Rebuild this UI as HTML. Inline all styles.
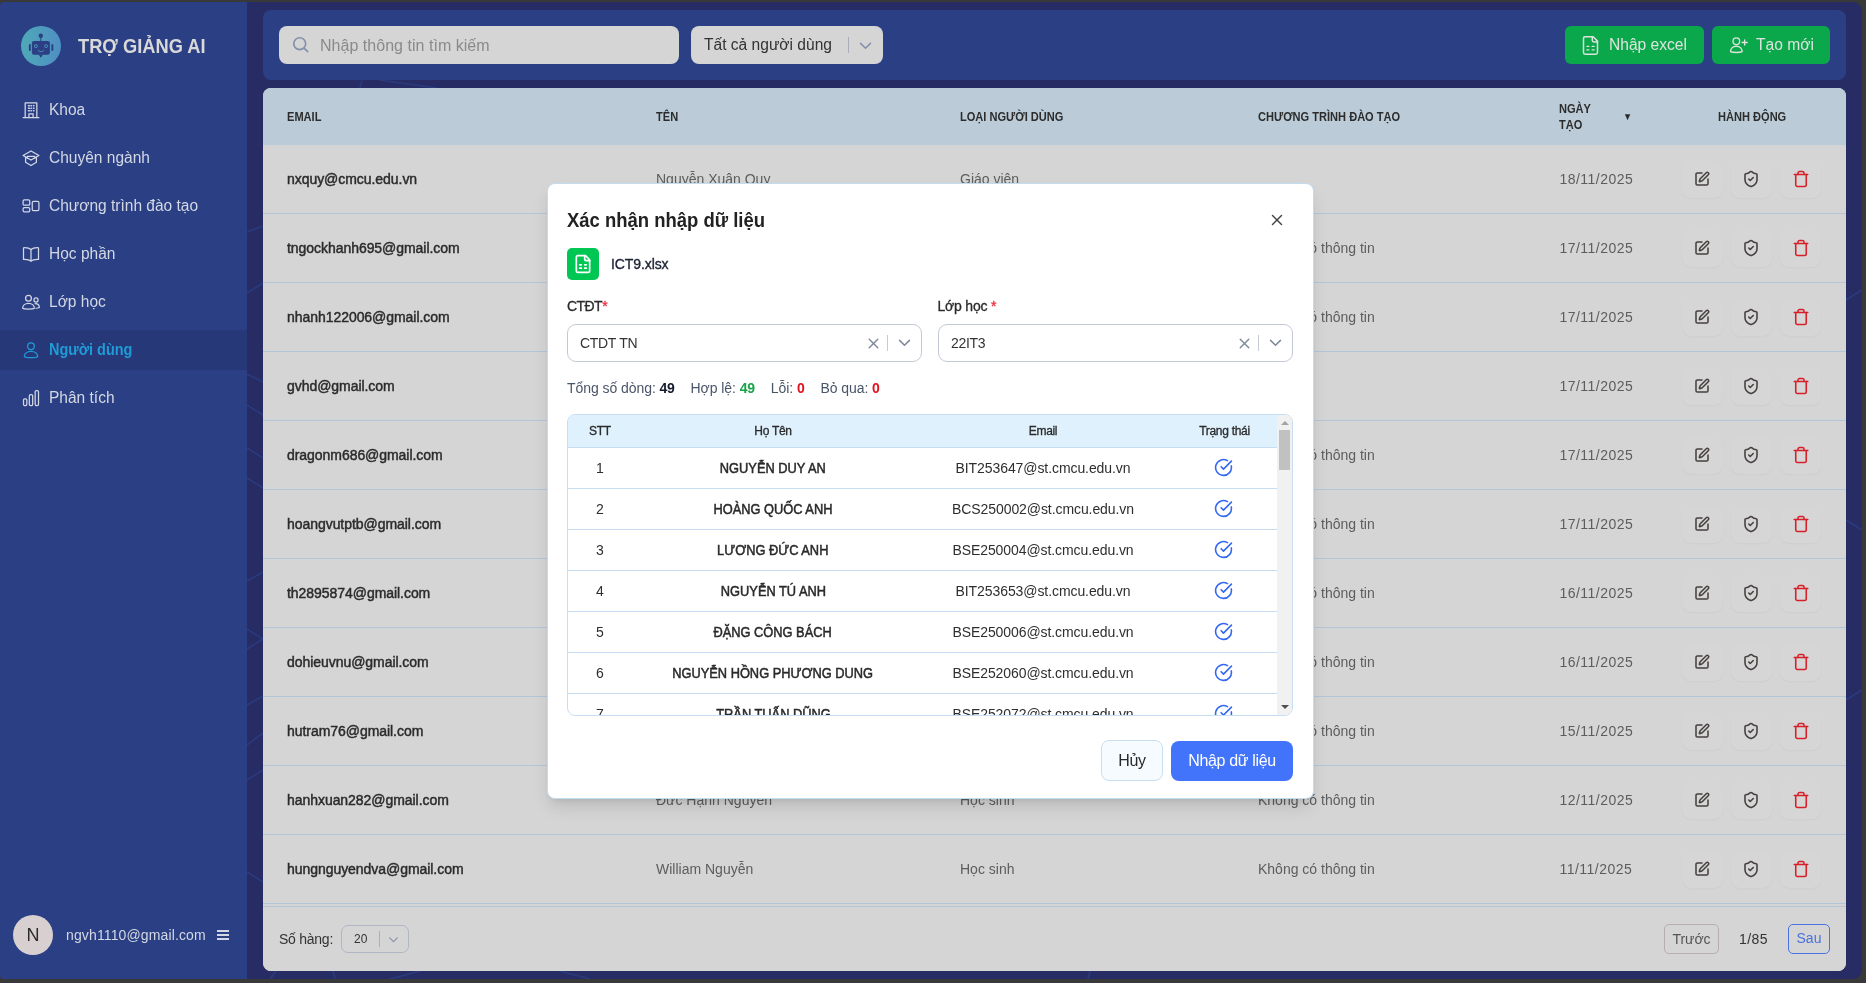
<!DOCTYPE html><html lang="vi"><head><meta charset="utf-8"><title>Trợ giảng AI</title><style>
*{box-sizing:border-box;margin:0;padding:0}
html,body{width:1866px;height:983px;overflow:hidden;background:#393939}
body{font-family:"Liberation Sans","DejaVu Sans",sans-serif;position:relative;color:#2a2a2a;-webkit-font-smoothing:antialiased}
.abs{position:absolute}
#app{position:absolute;left:0;top:2px;width:1862px;height:977px;border-radius:4px 9px 9px 4px;overflow:hidden;background:#272c65}
#pg{position:absolute;left:0;top:-2px;width:1866px;height:983px;will-change:transform}
#side{position:absolute;left:0;top:0;width:247px;height:983px;background:#2b3f84}
.logo{position:absolute;left:21px;top:26px;width:40px;height:40px;border-radius:50%;background:linear-gradient(90deg,#4fa9b7,#4f8fc3)}
.brand{position:absolute;left:78px;top:32.800px;font-size:20.600px;line-height:26px;font-weight:700;color:#d9d9d9;white-space:nowrap;transform:scaleX(.887);transform-origin:0 50%}
.nav{position:absolute;left:0;width:247px;height:40px;color:#d3d8e4;font-size:16px;line-height:40px;white-space:nowrap}
.nav svg{position:absolute;left:21px;top:10px;width:20px;height:20px}
.nav span{position:absolute;left:49px;top:0;transform:scaleX(.97);transform-origin:0 50%}
.nav.on{background:#263877;color:#1f9bd7;font-weight:700}
.nav.on span{transform:scaleX(.904)}
.avatar{position:absolute;left:13px;top:915px;width:40px;height:40px;border-radius:50%;background:#d8cfd1;color:#2b2b2b;font-size:18px;line-height:40px;text-align:center}
.uemail{position:absolute;left:66px;top:925px;font-size:14px;line-height:20px;color:#d3d8e4;letter-spacing:.13px;white-space:nowrap}
.burger{position:absolute;left:217px;top:930px;width:12px;height:10px;border-top:2px solid #d3d8e4;border-bottom:2px solid #d3d8e4}
.burger:after{content:"";position:absolute;left:0;top:2px;width:12px;height:2px;background:#d3d8e4}
#bar{position:absolute;left:263px;top:10px;width:1583px;height:70px;border-radius:8px;background:#2b3f84}
.search{position:absolute;left:279px;top:26px;width:400px;height:38px;border-radius:8px;background:#d5d5d5}
.search span{position:absolute;left:41px;top:0;line-height:39px;font-size:16px;color:#8c8989;letter-spacing:.03px;white-space:nowrap}
.search svg{position:absolute;left:11.500px;top:9px;width:19px;height:19px}
.fsel{position:absolute;left:691px;top:26px;width:192px;height:38px;border-radius:8px;background:#d5d5d5}
.fsel span{position:absolute;left:13px;top:0;line-height:37px;font-size:16px;color:#333;white-space:nowrap;transform:scaleX(.973);transform-origin:0 50%}
.fsel i{position:absolute;left:157px;top:11px;width:1px;height:16px;background:#a9aebb}
.fsel svg{position:absolute;left:165.500px;top:10.500px;width:17px;height:17px}
.gbtn{position:absolute;top:26px;height:38px;border-radius:6px;background:#0ba84b;color:#dde4de;font-size:16px;line-height:37px;white-space:nowrap}
.gbtn svg{position:absolute;left:16px;top:10px;width:18px;height:18px}
.gbtn span{position:absolute;left:44px;top:0;transform:scaleX(.974);transform-origin:0 50%}
#card{position:absolute;left:263px;top:88px;width:1583px;height:883px;border-radius:8px;background:#d5d5d5;overflow:hidden}
.thead{position:absolute;left:0;top:0;width:1583px;height:57px;background:#bbccd8}
.th{position:absolute;font-size:12px;line-height:16px;font-weight:700;color:#2c2c2c;white-space:nowrap;transform:scaleX(.922);transform-origin:0 50%}
.tr{position:absolute;left:0;width:1583px;height:69px;border-bottom:1px solid #b3c7d9}
.tr div{position:absolute;top:0;line-height:68px;font-size:14px;white-space:nowrap;color:#5d5d5d}
.tr .em{left:24px;color:#2b2b2b;letter-spacing:-.05px;-webkit-text-stroke:.45px #2b2b2b}
.tr .nm{left:393px}.tr .ty{left:697px}.tr .pr{left:995px}.tr .dt{left:1296.500px;letter-spacing:.47px}
.act{position:absolute;top:15.500px;width:41px;height:37px;border-radius:9px;background:#d6d6d6;box-shadow:0 1px 2px rgba(0,0,0,.035)}
.act svg{position:absolute}
.tfoot{position:absolute;left:0;top:818px;width:1583px;height:65px;border-top:1px solid #b3c7d9;background:#d5d5d5}
.tfoot .lbl{position:absolute;left:16px;top:21.500px;font-size:14px;line-height:20px;color:#333;letter-spacing:-.25px}
.psel{position:absolute;left:78px;top:18px;width:68px;height:28px;border:1px solid #b0b6c4;border-radius:7px}
.psel span{position:absolute;left:12px;top:0;line-height:26px;font-size:12px;color:#333}
.psel i{position:absolute;left:37px;top:5px;width:1px;height:16px;background:#a9aec0}
.psel svg{position:absolute;left:45px;top:7px;width:13px;height:13px}
.pbtn{position:absolute;top:17px;height:30px;border:1px solid #b8adb2;border-radius:5px;font-size:14px;line-height:28px;text-align:center;color:#555}
.pbtn.nx{border:1.500px solid #4a74e4;color:#4a70dc;line-height:27px}
.pnum{position:absolute;left:1476px;top:22px;font-size:14px;line-height:20px;color:#333;letter-spacing:.45px}

#modal{position:absolute;left:547px;top:183px;width:767px;height:616px;border-radius:8px;background:#fff;border:1px solid #c3ddf0;box-shadow:0 10px 18px -3px rgba(0,0,0,.13),0 4px 6px -2px rgba(0,0,0,.07)}
.m{position:absolute;left:-548px;top:-184px;width:1866px;height:983px;will-change:transform}
.mtitle{position:absolute;left:567px;top:207px;font-size:20px;line-height:26px;font-weight:700;color:#222;white-space:nowrap;transform:scaleX(.923);transform-origin:0 50%}
.mx{position:absolute;left:1268px;top:211px;width:18px;height:18px}
.ficon{position:absolute;left:567px;top:248px;width:32px;height:32px;border-radius:5px;background:#00c753}
.ficon svg{position:absolute;left:6px;top:6px;width:20px;height:20px}
.fname{position:absolute;left:611px;top:254px;font-size:14px;line-height:20px;color:#1c2233;letter-spacing:-.1px;-webkit-text-stroke:.35px #1c2233;white-space:nowrap}
.mlbl{position:absolute;top:296px;font-size:14px;line-height:20px;color:#2a2a2a;letter-spacing:-.2px;-webkit-text-stroke:.3px #2a2a2a;white-space:nowrap}
.mlbl b{color:#f0283c;font-weight:400;-webkit-text-stroke:.3px #f0283c}
.msel{position:absolute;top:324px;width:355px;height:38px;border:1px solid #c3c9d6;border-radius:9px;background:#fff}
.msel span{position:absolute;left:12px;top:0;line-height:36px;font-size:14px;color:#333;letter-spacing:-.3px;white-space:nowrap}
.msel i{position:absolute;left:319px;top:10px;width:1px;height:16px;background:#c5cad3}
.msel svg.x{position:absolute;left:296.500px;top:9.500px;width:17px;height:17px}
.msel svg.c{position:absolute;left:327.500px;top:8.900px;width:17px;height:17px}
.stats{position:absolute;left:567px;top:378px;font-size:14px;line-height:20px;color:#4a5568;letter-spacing:-.06px;white-space:nowrap}
.stats b{font-weight:700;color:#151a2b;letter-spacing:-.3px}
.stats b.g{color:#17a34a}.stats b.r{color:#e0121f}
.stats span{display:inline-block;margin-right:16px}
#mt{will-change:transform;position:absolute;left:567px;top:414px;width:726px;height:302px;border:1px solid #c7ddf1;border-radius:8px;overflow:hidden;background:#fff}
.mth{position:absolute;left:0;top:0;width:709px;height:33px;background:#dff1fd;border-bottom:1px solid #c7ddf1}
.mth div{position:absolute;top:0;line-height:32px;font-size:12px;color:#2a2a2a;text-align:center;letter-spacing:-.3px;-webkit-text-stroke:.3px #2a2a2a}
.mr{position:absolute;left:0;width:709px;height:41px;border-bottom:1px solid #c7ddf1}
.mr div{position:absolute;top:0;line-height:40px;font-size:14px;color:#2e2e2e;text-align:center;white-space:nowrap}
.c1{left:0;width:64px}.c2{left:64px;width:282px}.c3{left:346px;width:258px}.c4{left:604px;width:105px}
.mr .c2{-webkit-text-stroke:.5px #2a2a2a;color:#2a2a2a}.mr .c2 span{display:inline-block;transform:scaleX(.916)}
.mr .c3{letter-spacing:-.08px}
.mr svg{position:absolute;left:646.300px;top:10.400px;width:19px;height:19px}
.sb{position:absolute;left:709px;top:0;width:15px;height:300px;background:#f1f1f1}
.sb .t{position:absolute;left:2px;top:15px;width:11px;height:40px;background:#c1c1c1}
.sb .u{position:absolute;left:3.5px;top:6px;width:0;height:0;border-left:4px solid transparent;border-right:4px solid transparent;border-bottom:4px solid #a3a3a3}
.sb .d{position:absolute;left:3.5px;top:290px;width:0;height:0;border-left:4px solid transparent;border-right:4px solid transparent;border-top:4px solid #505050}
.bcancel{position:absolute;left:1101px;top:740px;width:62px;height:41px;border:1px solid #c9def0;border-radius:8px;background:#f5fbfe;font-size:16px;line-height:39px;text-align:center;color:#2a2a2a;letter-spacing:-.3px}
.bok{position:absolute;left:1171px;top:741px;width:122px;height:40px;border-radius:8px;background:#4274fb;font-size:16px;line-height:39px;text-align:center;color:#fff;letter-spacing:-.35px;white-space:nowrap}
</style></head><body><div id="app"><div id="pg"><svg class="abs" style="left:247px;top:0;width:1619px;height:983px" viewBox="247 0 1619 983" fill="none" stroke="#2f4b96" stroke-width="1.600" opacity=".5">
<path d="M247 232 263 226M247 293 263 283M247 374 263 382M247 405 263 415M247 448 263 458M247 478 263 488M247 581 263 572M247 629 263 639 247 649M247 705 263 696M247 745 263 733M247 780 263 770M247 872 263 882M379 80 437 88M362 80 360 88M276 971 270 979M333 971 335 979M420 971 390 979M560 971 590 979M1090 971 1088 979M1846 300 1862 290M1846 520 1862 530M1846 700 1862 690"/></svg><div id="side"><div class="logo"><svg viewBox="0 0 40 40" style="position:absolute;left:0;top:0;width:40px;height:40px">
<g fill="#2b3f84" stroke="none">
<circle cx="19.800" cy="9.700" r="2.200"/><rect x="19.300" y="11" width="1" height="4.500"/>
<rect x="10.900" y="15" width="18" height="13.700" rx="2"/>
<rect x="7.900" y="18" width="1.900" height="7" rx=".9"/><rect x="30.400" y="18" width="1.900" height="7" rx=".9"/>
<path d="M17.600 28.400h4.400l-2.200 3.300z"/>
</g>
<circle cx="14.900" cy="20.100" r="1.500" fill="none" stroke="#4fa3ba" stroke-width=".8"/>
<circle cx="25" cy="20.100" r="1.500" fill="none" stroke="#4f98c0" stroke-width=".8"/>
<path d="M17.100 24.300c1.700 1.900 4.100 1.900 5.800 0" fill="none" stroke="#4f9dbd" stroke-width=".9" stroke-linecap="round"/>
</svg></div><div class="brand">TRỢ GIẢNG AI</div><div class="nav" style="top:90px"><svg viewBox="0 0 24 24" fill="none" stroke="#d3d8e4" stroke-width="1.5" stroke-linecap="round" stroke-linejoin="round" ><path d="M2.5 21h19"/><path d="M5 21V3.5h14V21"/><path d="M9.5 21v-4.5h5V21"/><path d="M9 7h1M12 7h.5M15 7h.5M9 10h1M12 10h.5M15 10h.5M9 13h1M12 13h.5M15 13h.5" stroke-width="1.8"/></svg><span>Khoa</span></div><div class="nav" style="top:138px"><svg viewBox="0 0 24 24" fill="none" stroke="#d3d8e4" stroke-width="1.5" stroke-linecap="round" stroke-linejoin="round" ><path d="M12 3.5 21.5 9 12 14.500 2.500 9Z"/><path d="M5.500 11v6L12 21l6.500-4v-6"/><path d="M7.500 12.500v-2.500h9v2.500" stroke-width="1.400"/></svg><span>Chuyên ngành</span></div><div class="nav" style="top:186px"><svg viewBox="0 0 24 24" fill="none" stroke="#d3d8e4" stroke-width="1.5" stroke-linecap="round" stroke-linejoin="round" ><rect x="2.500" y="4.500" width="8" height="6.500" rx="1.500"/><rect x="2.500" y="14" width="8" height="5" rx="1.500"/><rect x="13.500" y="6.500" width="8" height="11" rx="1.500"/></svg><span>Chương trình đào tạo</span></div><div class="nav" style="top:234px"><svg viewBox="0 0 24 24" fill="none" stroke="#d3d8e4" stroke-width="1.5" stroke-linecap="round" stroke-linejoin="round" ><path d="M12 6.500c-2-1.700-5-2.200-9-2v14c4-.2 7 .3 9 2 2-1.700 5-2.200 9-2v-14c-4-.2-7 .3-9 2z"/><path d="M12 6.500v14"/></svg><span>Học phần</span></div><div class="nav" style="top:282px"><svg viewBox="0 0 24 24" fill="none" stroke="#d3d8e4" stroke-width="1.5" stroke-linecap="round" stroke-linejoin="round" ><circle cx="9" cy="7.500" r="3.500"/><path d="M2 19.500c0-3.500 3-6 7-6s7 2.500 7 6c-2 1.300-12 1.300-14 0z"/><circle cx="18" cy="9.500" r="2.500"/><path d="M17 14c3 0 5 1.800 5 4.500-1 .6-2.500.9-4 1"/></svg><span>Lớp học</span></div><div class="nav on" style="top:330px"><svg viewBox="0 0 24 24" fill="none" stroke="#1f9bd7" stroke-width="1.5" stroke-linecap="round" stroke-linejoin="round" ><circle cx="12" cy="7.500" r="4"/><path d="M4 20c0-4 3.500-6.500 8-6.500s8 2.500 8 6.500c-2.500 1.500-13.500 1.500-16 0z"/></svg><span>Người dùng</span></div><div class="nav" style="top:378px"><svg viewBox="0 0 24 24" fill="none" stroke="#d3d8e4" stroke-width="1.5" stroke-linecap="round" stroke-linejoin="round" ><rect x="3" y="13" width="4" height="8" rx="1.500"/><rect x="10" y="8" width="4" height="13" rx="1.500"/><rect x="17" y="3" width="4" height="18" rx="1.500"/></svg><span>Phân tích</span></div><div class="avatar">N</div><div class="uemail">ngvh1110@gmail.com</div><div class="burger"></div></div><div id="bar"></div><div class="search"><svg viewBox="0 0 24 24" fill="none" stroke="#8291ab" stroke-width="2.1" stroke-linecap="round" stroke-linejoin="round" ><circle cx="11" cy="11" r="7.500"/><path d="m21 21-4.500-4.500"/></svg><span>Nhập thông tin tìm kiếm</span></div><div class="fsel"><span>Tất cả người dùng</span><i></i><svg viewBox="0 0 24 24" fill="none" stroke="#8290a8" stroke-width="2.1" stroke-linecap="round" stroke-linejoin="round" ><path d="m5 9 7 7 7-7"/></svg></div><div class="gbtn" style="left:1565px;width:139px"><svg viewBox="0 0 24 24" fill="none" stroke="#dde4de" stroke-width="1.7" stroke-linecap="round" stroke-linejoin="round" style="left:14.500px;top:8.500px;width:21px;height:21px"><path d="M15 2H6a2 2 0 0 0-2 2v16a2 2 0 0 0 2 2h12a2 2 0 0 0 2-2V7Z"/><path d="M14 2v4a2 2 0 0 0 2 2h4"/><path d="M8 13h2"/><path d="M14 13h2"/><path d="M8 17h2"/><path d="M14 17h2"/></svg><span>Nhập excel</span></div><div class="gbtn" style="left:1712px;width:118px"><svg viewBox="0 0 24 24" fill="none" stroke="#dde4de" stroke-width="1.6" stroke-linecap="round" stroke-linejoin="round" style="left:15.500px;top:9px;width:20px;height:20px"><circle cx="10" cy="7.500" r="4"/><path d="M3 20c0-4 3-6.500 7-6.500s7 2.500 7 6.500c-2.500 1.300-11.500 1.300-14 0z"/><path d="M20 6v6M17 9h6"/></svg><span>Tạo mới</span></div><div id="card"><div class="thead"><div class="th" style="left:24px;top:21px">EMAIL</div><div class="th" style="left:393px;top:21px">TÊN</div><div class="th" style="left:697px;top:21px">LOẠI NGƯỜI DÙNG</div><div class="th" style="left:995px;top:21px">CHƯƠNG TRÌNH ĐÀO TẠO</div><div class="th" style="left:1296px;top:13px">NGÀY<br>TẠO</div><div class="th" style="left:1360px;top:21px;font-size:10px;letter-spacing:0">▼</div><div class="th" style="left:1454.600px;top:21px">HÀNH ĐỘNG</div></div><div class="tr" style="top:57px"><div class="em">nxquy@cmcu.edu.vn</div><div class="nm">Nguyễn Xuân Quy</div><div class="ty">Giáo viên</div><div class="pr"></div><div class="dt">18/11/2025</div><span class="act" style="left:1419px"><svg viewBox="0 0 24 24" fill="none" stroke="#474040" stroke-width="2.3" stroke-linecap="round" stroke-linejoin="round" style="left:11.700px;top:10.300px;width:16px;height:16px"><path d="M12 3H5a2 2 0 0 0-2 2v14a2 2 0 0 0 2 2h14a2 2 0 0 0 2-2v-7"/><path d="M18.375 2.625a1 1 0 0 1 3 3l-9.013 9.014a2 2 0 0 1-.853.505l-2.873.84a.5.5 0 0 1-.62-.62l.84-2.873a2 2 0 0 1 .506-.852z"/></svg></span><span class="act" style="left:1468px"><svg viewBox="0 0 24 24" fill="none" stroke="#474040" stroke-width="2.1" stroke-linecap="round" stroke-linejoin="round" style="left:10.900px;top:9.400px;width:18px;height:18px"><path d="M20 13c0 5-3.500 7.500-7.660 8.950a1 1 0 0 1-.670-.010C7.500 20.500 4 18 4 13V6a1 1 0 0 1 1-1c2 0 4.500-1.200 6.240-2.720a1.170 1.170 0 0 1 1.520 0C14.510 3.810 17 5 19 5a1 1 0 0 1 1 1z"/><path d="m9 12 2 2 4-4"/></svg></span><span class="act" style="left:1517px"><svg viewBox="0 0 24 24" fill="none" stroke="#d8202a" stroke-width="2.1" stroke-linecap="round" stroke-linejoin="round" style="left:11.900px;top:9.200px;width:18px;height:18px"><path d="M3 6h18"/><path d="M19 6v14c0 1-1 2-2 2H7c-1 0-2-1-2-2V6"/><path d="M8 6V4c0-1 1-2 2-2h4c1 0 2 1 2 2v2"/></svg></span></div><div class="tr" style="top:126px"><div class="em">tngockhanh695@gmail.com</div><div class="nm"></div><div class="ty">Học sinh</div><div class="pr">Không có thông tin</div><div class="dt">17/11/2025</div><span class="act" style="left:1419px"><svg viewBox="0 0 24 24" fill="none" stroke="#474040" stroke-width="2.3" stroke-linecap="round" stroke-linejoin="round" style="left:11.700px;top:10.300px;width:16px;height:16px"><path d="M12 3H5a2 2 0 0 0-2 2v14a2 2 0 0 0 2 2h14a2 2 0 0 0 2-2v-7"/><path d="M18.375 2.625a1 1 0 0 1 3 3l-9.013 9.014a2 2 0 0 1-.853.505l-2.873.84a.5.5 0 0 1-.62-.62l.84-2.873a2 2 0 0 1 .506-.852z"/></svg></span><span class="act" style="left:1468px"><svg viewBox="0 0 24 24" fill="none" stroke="#474040" stroke-width="2.1" stroke-linecap="round" stroke-linejoin="round" style="left:10.900px;top:9.400px;width:18px;height:18px"><path d="M20 13c0 5-3.500 7.500-7.660 8.950a1 1 0 0 1-.670-.010C7.500 20.500 4 18 4 13V6a1 1 0 0 1 1-1c2 0 4.500-1.200 6.240-2.720a1.170 1.170 0 0 1 1.520 0C14.510 3.810 17 5 19 5a1 1 0 0 1 1 1z"/><path d="m9 12 2 2 4-4"/></svg></span><span class="act" style="left:1517px"><svg viewBox="0 0 24 24" fill="none" stroke="#d8202a" stroke-width="2.1" stroke-linecap="round" stroke-linejoin="round" style="left:11.900px;top:9.200px;width:18px;height:18px"><path d="M3 6h18"/><path d="M19 6v14c0 1-1 2-2 2H7c-1 0-2-1-2-2V6"/><path d="M8 6V4c0-1 1-2 2-2h4c1 0 2 1 2 2v2"/></svg></span></div><div class="tr" style="top:195px"><div class="em">nhanh122006@gmail.com</div><div class="nm"></div><div class="ty">Học sinh</div><div class="pr">Không có thông tin</div><div class="dt">17/11/2025</div><span class="act" style="left:1419px"><svg viewBox="0 0 24 24" fill="none" stroke="#474040" stroke-width="2.3" stroke-linecap="round" stroke-linejoin="round" style="left:11.700px;top:10.300px;width:16px;height:16px"><path d="M12 3H5a2 2 0 0 0-2 2v14a2 2 0 0 0 2 2h14a2 2 0 0 0 2-2v-7"/><path d="M18.375 2.625a1 1 0 0 1 3 3l-9.013 9.014a2 2 0 0 1-.853.505l-2.873.84a.5.5 0 0 1-.62-.62l.84-2.873a2 2 0 0 1 .506-.852z"/></svg></span><span class="act" style="left:1468px"><svg viewBox="0 0 24 24" fill="none" stroke="#474040" stroke-width="2.1" stroke-linecap="round" stroke-linejoin="round" style="left:10.900px;top:9.400px;width:18px;height:18px"><path d="M20 13c0 5-3.500 7.500-7.660 8.950a1 1 0 0 1-.670-.010C7.500 20.500 4 18 4 13V6a1 1 0 0 1 1-1c2 0 4.500-1.200 6.240-2.720a1.170 1.170 0 0 1 1.520 0C14.510 3.810 17 5 19 5a1 1 0 0 1 1 1z"/><path d="m9 12 2 2 4-4"/></svg></span><span class="act" style="left:1517px"><svg viewBox="0 0 24 24" fill="none" stroke="#d8202a" stroke-width="2.1" stroke-linecap="round" stroke-linejoin="round" style="left:11.900px;top:9.200px;width:18px;height:18px"><path d="M3 6h18"/><path d="M19 6v14c0 1-1 2-2 2H7c-1 0-2-1-2-2V6"/><path d="M8 6V4c0-1 1-2 2-2h4c1 0 2 1 2 2v2"/></svg></span></div><div class="tr" style="top:264px"><div class="em">gvhd@gmail.com</div><div class="nm"></div><div class="ty">Giáo viên</div><div class="pr"></div><div class="dt">17/11/2025</div><span class="act" style="left:1419px"><svg viewBox="0 0 24 24" fill="none" stroke="#474040" stroke-width="2.3" stroke-linecap="round" stroke-linejoin="round" style="left:11.700px;top:10.300px;width:16px;height:16px"><path d="M12 3H5a2 2 0 0 0-2 2v14a2 2 0 0 0 2 2h14a2 2 0 0 0 2-2v-7"/><path d="M18.375 2.625a1 1 0 0 1 3 3l-9.013 9.014a2 2 0 0 1-.853.505l-2.873.84a.5.5 0 0 1-.62-.62l.84-2.873a2 2 0 0 1 .506-.852z"/></svg></span><span class="act" style="left:1468px"><svg viewBox="0 0 24 24" fill="none" stroke="#474040" stroke-width="2.1" stroke-linecap="round" stroke-linejoin="round" style="left:10.900px;top:9.400px;width:18px;height:18px"><path d="M20 13c0 5-3.500 7.500-7.660 8.950a1 1 0 0 1-.670-.010C7.500 20.500 4 18 4 13V6a1 1 0 0 1 1-1c2 0 4.500-1.200 6.240-2.720a1.170 1.170 0 0 1 1.520 0C14.510 3.810 17 5 19 5a1 1 0 0 1 1 1z"/><path d="m9 12 2 2 4-4"/></svg></span><span class="act" style="left:1517px"><svg viewBox="0 0 24 24" fill="none" stroke="#d8202a" stroke-width="2.1" stroke-linecap="round" stroke-linejoin="round" style="left:11.900px;top:9.200px;width:18px;height:18px"><path d="M3 6h18"/><path d="M19 6v14c0 1-1 2-2 2H7c-1 0-2-1-2-2V6"/><path d="M8 6V4c0-1 1-2 2-2h4c1 0 2 1 2 2v2"/></svg></span></div><div class="tr" style="top:333px"><div class="em">dragonm686@gmail.com</div><div class="nm"></div><div class="ty">Học sinh</div><div class="pr">Không có thông tin</div><div class="dt">17/11/2025</div><span class="act" style="left:1419px"><svg viewBox="0 0 24 24" fill="none" stroke="#474040" stroke-width="2.3" stroke-linecap="round" stroke-linejoin="round" style="left:11.700px;top:10.300px;width:16px;height:16px"><path d="M12 3H5a2 2 0 0 0-2 2v14a2 2 0 0 0 2 2h14a2 2 0 0 0 2-2v-7"/><path d="M18.375 2.625a1 1 0 0 1 3 3l-9.013 9.014a2 2 0 0 1-.853.505l-2.873.84a.5.5 0 0 1-.62-.62l.84-2.873a2 2 0 0 1 .506-.852z"/></svg></span><span class="act" style="left:1468px"><svg viewBox="0 0 24 24" fill="none" stroke="#474040" stroke-width="2.1" stroke-linecap="round" stroke-linejoin="round" style="left:10.900px;top:9.400px;width:18px;height:18px"><path d="M20 13c0 5-3.500 7.500-7.660 8.950a1 1 0 0 1-.670-.010C7.500 20.500 4 18 4 13V6a1 1 0 0 1 1-1c2 0 4.500-1.200 6.240-2.720a1.170 1.170 0 0 1 1.520 0C14.510 3.810 17 5 19 5a1 1 0 0 1 1 1z"/><path d="m9 12 2 2 4-4"/></svg></span><span class="act" style="left:1517px"><svg viewBox="0 0 24 24" fill="none" stroke="#d8202a" stroke-width="2.1" stroke-linecap="round" stroke-linejoin="round" style="left:11.900px;top:9.200px;width:18px;height:18px"><path d="M3 6h18"/><path d="M19 6v14c0 1-1 2-2 2H7c-1 0-2-1-2-2V6"/><path d="M8 6V4c0-1 1-2 2-2h4c1 0 2 1 2 2v2"/></svg></span></div><div class="tr" style="top:402px"><div class="em">hoangvutptb@gmail.com</div><div class="nm"></div><div class="ty">Học sinh</div><div class="pr">Không có thông tin</div><div class="dt">17/11/2025</div><span class="act" style="left:1419px"><svg viewBox="0 0 24 24" fill="none" stroke="#474040" stroke-width="2.3" stroke-linecap="round" stroke-linejoin="round" style="left:11.700px;top:10.300px;width:16px;height:16px"><path d="M12 3H5a2 2 0 0 0-2 2v14a2 2 0 0 0 2 2h14a2 2 0 0 0 2-2v-7"/><path d="M18.375 2.625a1 1 0 0 1 3 3l-9.013 9.014a2 2 0 0 1-.853.505l-2.873.84a.5.5 0 0 1-.62-.62l.84-2.873a2 2 0 0 1 .506-.852z"/></svg></span><span class="act" style="left:1468px"><svg viewBox="0 0 24 24" fill="none" stroke="#474040" stroke-width="2.1" stroke-linecap="round" stroke-linejoin="round" style="left:10.900px;top:9.400px;width:18px;height:18px"><path d="M20 13c0 5-3.500 7.500-7.660 8.950a1 1 0 0 1-.670-.010C7.500 20.500 4 18 4 13V6a1 1 0 0 1 1-1c2 0 4.500-1.200 6.240-2.720a1.170 1.170 0 0 1 1.520 0C14.510 3.810 17 5 19 5a1 1 0 0 1 1 1z"/><path d="m9 12 2 2 4-4"/></svg></span><span class="act" style="left:1517px"><svg viewBox="0 0 24 24" fill="none" stroke="#d8202a" stroke-width="2.1" stroke-linecap="round" stroke-linejoin="round" style="left:11.900px;top:9.200px;width:18px;height:18px"><path d="M3 6h18"/><path d="M19 6v14c0 1-1 2-2 2H7c-1 0-2-1-2-2V6"/><path d="M8 6V4c0-1 1-2 2-2h4c1 0 2 1 2 2v2"/></svg></span></div><div class="tr" style="top:471px"><div class="em">th2895874@gmail.com</div><div class="nm"></div><div class="ty">Học sinh</div><div class="pr">Không có thông tin</div><div class="dt">16/11/2025</div><span class="act" style="left:1419px"><svg viewBox="0 0 24 24" fill="none" stroke="#474040" stroke-width="2.3" stroke-linecap="round" stroke-linejoin="round" style="left:11.700px;top:10.300px;width:16px;height:16px"><path d="M12 3H5a2 2 0 0 0-2 2v14a2 2 0 0 0 2 2h14a2 2 0 0 0 2-2v-7"/><path d="M18.375 2.625a1 1 0 0 1 3 3l-9.013 9.014a2 2 0 0 1-.853.505l-2.873.84a.5.5 0 0 1-.62-.62l.84-2.873a2 2 0 0 1 .506-.852z"/></svg></span><span class="act" style="left:1468px"><svg viewBox="0 0 24 24" fill="none" stroke="#474040" stroke-width="2.1" stroke-linecap="round" stroke-linejoin="round" style="left:10.900px;top:9.400px;width:18px;height:18px"><path d="M20 13c0 5-3.500 7.500-7.660 8.950a1 1 0 0 1-.670-.010C7.500 20.500 4 18 4 13V6a1 1 0 0 1 1-1c2 0 4.500-1.200 6.240-2.720a1.170 1.170 0 0 1 1.520 0C14.510 3.810 17 5 19 5a1 1 0 0 1 1 1z"/><path d="m9 12 2 2 4-4"/></svg></span><span class="act" style="left:1517px"><svg viewBox="0 0 24 24" fill="none" stroke="#d8202a" stroke-width="2.1" stroke-linecap="round" stroke-linejoin="round" style="left:11.900px;top:9.200px;width:18px;height:18px"><path d="M3 6h18"/><path d="M19 6v14c0 1-1 2-2 2H7c-1 0-2-1-2-2V6"/><path d="M8 6V4c0-1 1-2 2-2h4c1 0 2 1 2 2v2"/></svg></span></div><div class="tr" style="top:540px"><div class="em">dohieuvnu@gmail.com</div><div class="nm"></div><div class="ty">Học sinh</div><div class="pr">Không có thông tin</div><div class="dt">16/11/2025</div><span class="act" style="left:1419px"><svg viewBox="0 0 24 24" fill="none" stroke="#474040" stroke-width="2.3" stroke-linecap="round" stroke-linejoin="round" style="left:11.700px;top:10.300px;width:16px;height:16px"><path d="M12 3H5a2 2 0 0 0-2 2v14a2 2 0 0 0 2 2h14a2 2 0 0 0 2-2v-7"/><path d="M18.375 2.625a1 1 0 0 1 3 3l-9.013 9.014a2 2 0 0 1-.853.505l-2.873.84a.5.5 0 0 1-.62-.62l.84-2.873a2 2 0 0 1 .506-.852z"/></svg></span><span class="act" style="left:1468px"><svg viewBox="0 0 24 24" fill="none" stroke="#474040" stroke-width="2.1" stroke-linecap="round" stroke-linejoin="round" style="left:10.900px;top:9.400px;width:18px;height:18px"><path d="M20 13c0 5-3.500 7.500-7.660 8.950a1 1 0 0 1-.670-.010C7.500 20.500 4 18 4 13V6a1 1 0 0 1 1-1c2 0 4.500-1.200 6.240-2.720a1.170 1.170 0 0 1 1.520 0C14.510 3.810 17 5 19 5a1 1 0 0 1 1 1z"/><path d="m9 12 2 2 4-4"/></svg></span><span class="act" style="left:1517px"><svg viewBox="0 0 24 24" fill="none" stroke="#d8202a" stroke-width="2.1" stroke-linecap="round" stroke-linejoin="round" style="left:11.900px;top:9.200px;width:18px;height:18px"><path d="M3 6h18"/><path d="M19 6v14c0 1-1 2-2 2H7c-1 0-2-1-2-2V6"/><path d="M8 6V4c0-1 1-2 2-2h4c1 0 2 1 2 2v2"/></svg></span></div><div class="tr" style="top:609px"><div class="em">hutram76@gmail.com</div><div class="nm"></div><div class="ty">Học sinh</div><div class="pr">Không có thông tin</div><div class="dt">15/11/2025</div><span class="act" style="left:1419px"><svg viewBox="0 0 24 24" fill="none" stroke="#474040" stroke-width="2.3" stroke-linecap="round" stroke-linejoin="round" style="left:11.700px;top:10.300px;width:16px;height:16px"><path d="M12 3H5a2 2 0 0 0-2 2v14a2 2 0 0 0 2 2h14a2 2 0 0 0 2-2v-7"/><path d="M18.375 2.625a1 1 0 0 1 3 3l-9.013 9.014a2 2 0 0 1-.853.505l-2.873.84a.5.5 0 0 1-.62-.62l.84-2.873a2 2 0 0 1 .506-.852z"/></svg></span><span class="act" style="left:1468px"><svg viewBox="0 0 24 24" fill="none" stroke="#474040" stroke-width="2.1" stroke-linecap="round" stroke-linejoin="round" style="left:10.900px;top:9.400px;width:18px;height:18px"><path d="M20 13c0 5-3.500 7.500-7.660 8.950a1 1 0 0 1-.670-.010C7.500 20.500 4 18 4 13V6a1 1 0 0 1 1-1c2 0 4.500-1.200 6.240-2.720a1.170 1.170 0 0 1 1.520 0C14.510 3.810 17 5 19 5a1 1 0 0 1 1 1z"/><path d="m9 12 2 2 4-4"/></svg></span><span class="act" style="left:1517px"><svg viewBox="0 0 24 24" fill="none" stroke="#d8202a" stroke-width="2.1" stroke-linecap="round" stroke-linejoin="round" style="left:11.900px;top:9.200px;width:18px;height:18px"><path d="M3 6h18"/><path d="M19 6v14c0 1-1 2-2 2H7c-1 0-2-1-2-2V6"/><path d="M8 6V4c0-1 1-2 2-2h4c1 0 2 1 2 2v2"/></svg></span></div><div class="tr" style="top:678px"><div class="em">hanhxuan282@gmail.com</div><div class="nm">Đức Hạnh Nguyễn</div><div class="ty">Học sinh</div><div class="pr">Không có thông tin</div><div class="dt">12/11/2025</div><span class="act" style="left:1419px"><svg viewBox="0 0 24 24" fill="none" stroke="#474040" stroke-width="2.3" stroke-linecap="round" stroke-linejoin="round" style="left:11.700px;top:10.300px;width:16px;height:16px"><path d="M12 3H5a2 2 0 0 0-2 2v14a2 2 0 0 0 2 2h14a2 2 0 0 0 2-2v-7"/><path d="M18.375 2.625a1 1 0 0 1 3 3l-9.013 9.014a2 2 0 0 1-.853.505l-2.873.84a.5.5 0 0 1-.62-.62l.84-2.873a2 2 0 0 1 .506-.852z"/></svg></span><span class="act" style="left:1468px"><svg viewBox="0 0 24 24" fill="none" stroke="#474040" stroke-width="2.1" stroke-linecap="round" stroke-linejoin="round" style="left:10.900px;top:9.400px;width:18px;height:18px"><path d="M20 13c0 5-3.500 7.500-7.660 8.950a1 1 0 0 1-.670-.010C7.500 20.500 4 18 4 13V6a1 1 0 0 1 1-1c2 0 4.500-1.200 6.240-2.720a1.170 1.170 0 0 1 1.520 0C14.510 3.810 17 5 19 5a1 1 0 0 1 1 1z"/><path d="m9 12 2 2 4-4"/></svg></span><span class="act" style="left:1517px"><svg viewBox="0 0 24 24" fill="none" stroke="#d8202a" stroke-width="2.1" stroke-linecap="round" stroke-linejoin="round" style="left:11.900px;top:9.200px;width:18px;height:18px"><path d="M3 6h18"/><path d="M19 6v14c0 1-1 2-2 2H7c-1 0-2-1-2-2V6"/><path d="M8 6V4c0-1 1-2 2-2h4c1 0 2 1 2 2v2"/></svg></span></div><div class="tr" style="top:747px"><div class="em">hungnguyendva@gmail.com</div><div class="nm">William Nguyễn</div><div class="ty">Học sinh</div><div class="pr">Không có thông tin</div><div class="dt">11/11/2025</div><span class="act" style="left:1419px"><svg viewBox="0 0 24 24" fill="none" stroke="#474040" stroke-width="2.3" stroke-linecap="round" stroke-linejoin="round" style="left:11.700px;top:10.300px;width:16px;height:16px"><path d="M12 3H5a2 2 0 0 0-2 2v14a2 2 0 0 0 2 2h14a2 2 0 0 0 2-2v-7"/><path d="M18.375 2.625a1 1 0 0 1 3 3l-9.013 9.014a2 2 0 0 1-.853.505l-2.873.84a.5.5 0 0 1-.62-.62l.84-2.873a2 2 0 0 1 .506-.852z"/></svg></span><span class="act" style="left:1468px"><svg viewBox="0 0 24 24" fill="none" stroke="#474040" stroke-width="2.1" stroke-linecap="round" stroke-linejoin="round" style="left:10.900px;top:9.400px;width:18px;height:18px"><path d="M20 13c0 5-3.500 7.500-7.660 8.950a1 1 0 0 1-.670-.010C7.500 20.500 4 18 4 13V6a1 1 0 0 1 1-1c2 0 4.500-1.200 6.240-2.720a1.170 1.170 0 0 1 1.520 0C14.510 3.810 17 5 19 5a1 1 0 0 1 1 1z"/><path d="m9 12 2 2 4-4"/></svg></span><span class="act" style="left:1517px"><svg viewBox="0 0 24 24" fill="none" stroke="#d8202a" stroke-width="2.1" stroke-linecap="round" stroke-linejoin="round" style="left:11.900px;top:9.200px;width:18px;height:18px"><path d="M3 6h18"/><path d="M19 6v14c0 1-1 2-2 2H7c-1 0-2-1-2-2V6"/><path d="M8 6V4c0-1 1-2 2-2h4c1 0 2 1 2 2v2"/></svg></span></div><div class="tfoot"><div class="lbl">Số hàng:</div><div class="psel"><span>20</span><i></i><svg viewBox="0 0 24 24" fill="none" stroke="#8a93a6" stroke-width="2.3" stroke-linecap="round" stroke-linejoin="round" ><path d="m5 9 7 7 7-7"/></svg></div><div class="pbtn" style="left:1401px;width:55px">Trước</div><div class="pnum">1/85</div><div class="pbtn nx" style="left:1525px;width:42px">Sau</div></div></div></div></div><div id="modal"><div class="m"><div class="mtitle">Xác nhận nhập dữ liệu</div><div class="mx"><svg viewBox="0 0 24 24" fill="none" stroke="#444" stroke-width="1.9" stroke-linecap="round" stroke-linejoin="round" ><path d="M18 6 6 18"/><path d="m6 6 12 12"/></svg></div><div class="ficon"><svg viewBox="0 0 24 24" fill="none" stroke="#fff" stroke-width="2" stroke-linecap="round" stroke-linejoin="round" ><path d="M15 2H6a2 2 0 0 0-2 2v16a2 2 0 0 0 2 2h12a2 2 0 0 0 2-2V7Z"/><path d="M14 2v4a2 2 0 0 0 2 2h4"/><path d="M8 13h2"/><path d="M14 13h2"/><path d="M8 17h2"/><path d="M14 17h2"/></svg></div><div class="fname">ICT9.xlsx</div><div class="mlbl" style="left:567px;letter-spacing:-.55px">CTĐT<b>*</b></div><div class="mlbl" style="left:937.500px">Lớp học <b>*</b></div><div class="msel" style="left:567px"><span>CTDT TN</span><svg viewBox="0 0 24 24" fill="none" stroke="#7d8899" stroke-width="2" stroke-linecap="round" stroke-linejoin="round" class=x><path d="M18 6 6 18"/><path d="m6 6 12 12"/></svg><i></i><svg viewBox="0 0 24 24" fill="none" stroke="#7d8899" stroke-width="2.1" stroke-linecap="round" stroke-linejoin="round" class=c><path d="m5 9 7 7 7-7"/></svg></div><div class="msel" style="left:938px"><span>22IT3</span><svg viewBox="0 0 24 24" fill="none" stroke="#7d8899" stroke-width="2" stroke-linecap="round" stroke-linejoin="round" class=x><path d="M18 6 6 18"/><path d="m6 6 12 12"/></svg><i></i><svg viewBox="0 0 24 24" fill="none" stroke="#7d8899" stroke-width="2.1" stroke-linecap="round" stroke-linejoin="round" class=c><path d="m5 9 7 7 7-7"/></svg></div><div class="stats"><span>Tổng số dòng: <b>49</b></span><span>Hợp lệ: <b class="g">49</b></span><span>Lỗi: <b class="r">0</b></span><span>Bỏ qua: <b class="r">0</b></span></div></div><div id="mt" style="left:19px;top:230px"><div class="mth"><div class="c1">STT</div><div class="c2">Họ Tên</div><div class="c3">Email</div><div class="c4">Trạng thái</div></div><div class="mr" style="top:33px"><div class="c1">1</div><div class="c2"><span>NGUYỄN DUY AN</span></div><div class="c3">BIT253647@st.cmcu.edu.vn</div><svg viewBox="0 0 24 24" fill="none" stroke="#3468f0" stroke-width="2" stroke-linecap="round" stroke-linejoin="round" ><path d="M21.801 10A10 10 0 1 1 17 3.335"/><path d="m9 11 3 3L22 4"/></svg></div><div class="mr" style="top:74px"><div class="c1">2</div><div class="c2"><span>HOÀNG QUỐC ANH</span></div><div class="c3">BCS250002@st.cmcu.edu.vn</div><svg viewBox="0 0 24 24" fill="none" stroke="#3468f0" stroke-width="2" stroke-linecap="round" stroke-linejoin="round" ><path d="M21.801 10A10 10 0 1 1 17 3.335"/><path d="m9 11 3 3L22 4"/></svg></div><div class="mr" style="top:115px"><div class="c1">3</div><div class="c2"><span>LƯƠNG ĐỨC ANH</span></div><div class="c3">BSE250004@st.cmcu.edu.vn</div><svg viewBox="0 0 24 24" fill="none" stroke="#3468f0" stroke-width="2" stroke-linecap="round" stroke-linejoin="round" ><path d="M21.801 10A10 10 0 1 1 17 3.335"/><path d="m9 11 3 3L22 4"/></svg></div><div class="mr" style="top:156px"><div class="c1">4</div><div class="c2"><span>NGUYỄN TÚ ANH</span></div><div class="c3">BIT253653@st.cmcu.edu.vn</div><svg viewBox="0 0 24 24" fill="none" stroke="#3468f0" stroke-width="2" stroke-linecap="round" stroke-linejoin="round" ><path d="M21.801 10A10 10 0 1 1 17 3.335"/><path d="m9 11 3 3L22 4"/></svg></div><div class="mr" style="top:197px"><div class="c1">5</div><div class="c2"><span>ĐẶNG CÔNG BÁCH</span></div><div class="c3">BSE250006@st.cmcu.edu.vn</div><svg viewBox="0 0 24 24" fill="none" stroke="#3468f0" stroke-width="2" stroke-linecap="round" stroke-linejoin="round" ><path d="M21.801 10A10 10 0 1 1 17 3.335"/><path d="m9 11 3 3L22 4"/></svg></div><div class="mr" style="top:238px"><div class="c1">6</div><div class="c2"><span>NGUYỄN HỒNG PHƯƠNG DUNG</span></div><div class="c3">BSE252060@st.cmcu.edu.vn</div><svg viewBox="0 0 24 24" fill="none" stroke="#3468f0" stroke-width="2" stroke-linecap="round" stroke-linejoin="round" ><path d="M21.801 10A10 10 0 1 1 17 3.335"/><path d="m9 11 3 3L22 4"/></svg></div><div class="mr" style="top:279px"><div class="c1">7</div><div class="c2"><span>TRẦN TUẤN DŨNG</span></div><div class="c3">BSE252072@st.cmcu.edu.vn</div><svg viewBox="0 0 24 24" fill="none" stroke="#3468f0" stroke-width="2" stroke-linecap="round" stroke-linejoin="round" ><path d="M21.801 10A10 10 0 1 1 17 3.335"/><path d="m9 11 3 3L22 4"/></svg></div><div class="sb"><div class="u"></div><div class="t"></div><div class="d"></div></div></div><div class="m"><div class="bcancel">Hủy</div><div class="bok">Nhập dữ liệu</div></div></div></body></html>
